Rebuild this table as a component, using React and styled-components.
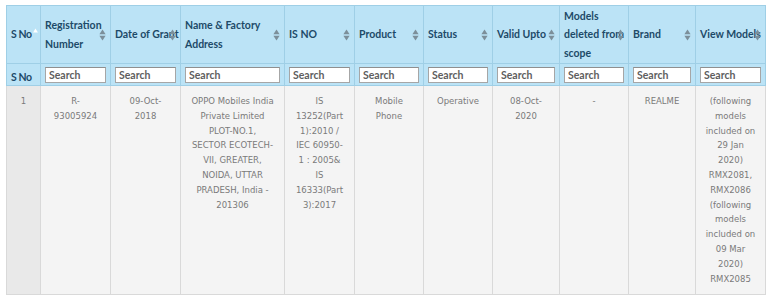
import React from "react";
import styled, { createGlobalStyle } from "styled-components";

// ===================== Global =====================
const Global = createGlobalStyle`
  * { box-sizing: border-box; }
  body {
    margin: 0;
    background: #fff;
    font-family: Lato, "Liberation Sans", sans-serif;
  }
`;

// ===================== Data =====================
const COLUMNS = [
  { key: "sno", label: ["S No"], width: 34, sorted: true },
  { key: "reg", label: ["Registration", "Number"], width: 70 },
  { key: "date", label: ["Date of Grant"], width: 70 },
  { key: "addr", label: ["Name & Factory", "Address"], width: 104, pad: 10 },
  { key: "isno", label: ["IS NO"], width: 70 },
  { key: "product", label: ["Product"], width: 69 },
  { key: "status", label: ["Status"], width: 69 },
  { key: "valid", label: ["Valid Upto"], width: 67 },
  { key: "deleted", label: ["Models", "deleted from", "scope"], width: 69 },
  { key: "brand", label: ["Brand"], width: 67 },
  { key: "models", label: ["View Models"], width: 70 },
];

const ROWS = [
  {
    sno: "1",
    reg: "R-93005924",
    date: "09-Oct-2018",
    addr: "OPPO Mobiles India Private Limited PLOT-NO.1, SECTOR ECOTECH-VII, GREATER, NOIDA, UTTAR PRADESH, India - 201306",
    isno: "IS 13252(Part 1):2010 / IEC 60950-1 : 2005& IS 16333(Part 3):2017",
    product: "Mobile Phone",
    status: "Operative",
    valid: "08-Oct-2020",
    deleted: "-",
    brand: "REALME",
    models: "(following models included on 29 Jan 2020) RMX2081, RMX2086 (following models included on 09 Mar 2020) RMX2085",
  },
];

// ===================== App =====================
export default function App() {
  return (
    <Page>
      <Global />
      <Grid>
        <colgroup>
          {COLUMNS.map((c) => (
            <col key={c.key} style={{ width: c.width }} />
          ))}
        </colgroup>
        <thead>
          <HeadRow>
            {COLUMNS.map((c) => (
              <HeadCell key={c.key}>
                <HeadLabel $tight={c.sorted}>
                  {c.label.map((line, i) => (
                    <React.Fragment key={i}>
                      {i > 0 && <br />}
                      {line}
                    </React.Fragment>
                  ))}
                  {c.sorted && <AscMark />}
                </HeadLabel>
                {!c.sorted && <SortIcon />}
              </HeadCell>
            ))}
          </HeadRow>
          <FilterRow>
            {COLUMNS.map((c) =>
              c.sorted ? (
                <FilterCell key={c.key}>
                  <FilterLabel>S No</FilterLabel>
                </FilterCell>
              ) : (
                <FilterCell key={c.key}>
                  <SearchInput placeholder="Search" />
                </FilterCell>
              )
            )}
          </FilterRow>
        </thead>
        <tbody>
          {ROWS.map((r) => (
            <tr key={r.sno}>
              {COLUMNS.map((c) => (
                <BodyCell key={c.key} $first={c.sorted} $pad={c.pad || 9}>
                  {r[c.key]}
                </BodyCell>
              ))}
            </tr>
          ))}
        </tbody>
      </Grid>
    </Page>
  );
}

// ===================== Icons =====================
function SortIcon() {
  return (
    <SortWrap viewBox="0 0 7 12" width="7" height="12" aria-hidden="true">
      <path d="M3.5 0.6 L6.6 5.2 H0.4 Z" fill="#7c8f9a" />
      <path d="M3.5 11.4 L6.6 6.8 H0.4 Z" fill="#7c8f9a" />
    </SortWrap>
  );
}

function AscMark() {
  return (
    <AscWrap viewBox="0 0 6 5" width="5" height="5" aria-hidden="true">
      <path d="M3 0.2 L5.9 4.8 H0.1 Z" fill="#ffffff" />
    </AscWrap>
  );
}

// ===================== Layout =====================
const Page = styled.div`
  padding: 5px 0 0 6px;
`;

const Grid = styled.table`
  table-layout: fixed;
  width: 759px;
  border-collapse: collapse;
`;

const HeadRow = styled.tr`
  height: 58px;
  background: #bbe3f6;
`;

const HeadCell = styled.th`
  position: relative;
  padding: 0 4px;
  text-align: left;
  vertical-align: middle;
  border: 1px solid #9fcfe6;
  overflow: visible;
`;

const HeadLabel = styled.span`
  display: block;
  white-space: nowrap;
  font-size: 10.5px;
  line-height: 18.5px;
  font-weight: 700;
  color: #1d4a68;
  letter-spacing: ${(p) => (p.$tight ? "-0.4px" : "0")};
`;

const SortWrap = styled.svg`
  position: absolute;
  right: 4px;
  top: 50%;
  margin-top: -6px;
  display: block;
`;

const AscWrap = styled.svg`
  position: relative;
  z-index: 1;
  display: inline-block;
  vertical-align: 5px;
  margin-left: 1px;
`;

const FilterRow = styled.tr`
  height: 22px;
  background: #bbe3f6;
`;

const FilterCell = styled.th`
  padding: 0 4px;
  text-align: left;
  vertical-align: middle;
  border: 1px solid #9fcfe6;
`;

const FilterLabel = styled.span`
  font-size: 10.5px;
  font-weight: 700;
  color: #1d4a68;
  letter-spacing: -0.4px;
`;

const SearchInput = styled.input`
  display: block;
  width: 100%;
  height: 16px;
  margin: 0;
  padding: 0 3px;
  border: 1px solid #a6a6a6;
  border-top-color: #8f8f8f;
  background: #fff;
  font-family: Lato, "Liberation Sans", sans-serif;
  font-size: 10.5px;
  font-weight: 700;
  color: #555;
  &::placeholder { color: #5e5e5e; opacity: 1; }
`;

const BodyCell = styled.td`
  padding: 8px ${(p) => p.$pad}px;
  vertical-align: top;
  text-align: center;
  font-family: "DejaVu Sans", Verdana, sans-serif;
  font-size: 8.5px;
  line-height: 14.8px;
  color: #7a7a7a;
  background: ${(p) => (p.$first ? "#e9e9e9" : "#f4f4f4")};
  border: 1px solid #d9d9d9;
  word-wrap: break-word;
`;
